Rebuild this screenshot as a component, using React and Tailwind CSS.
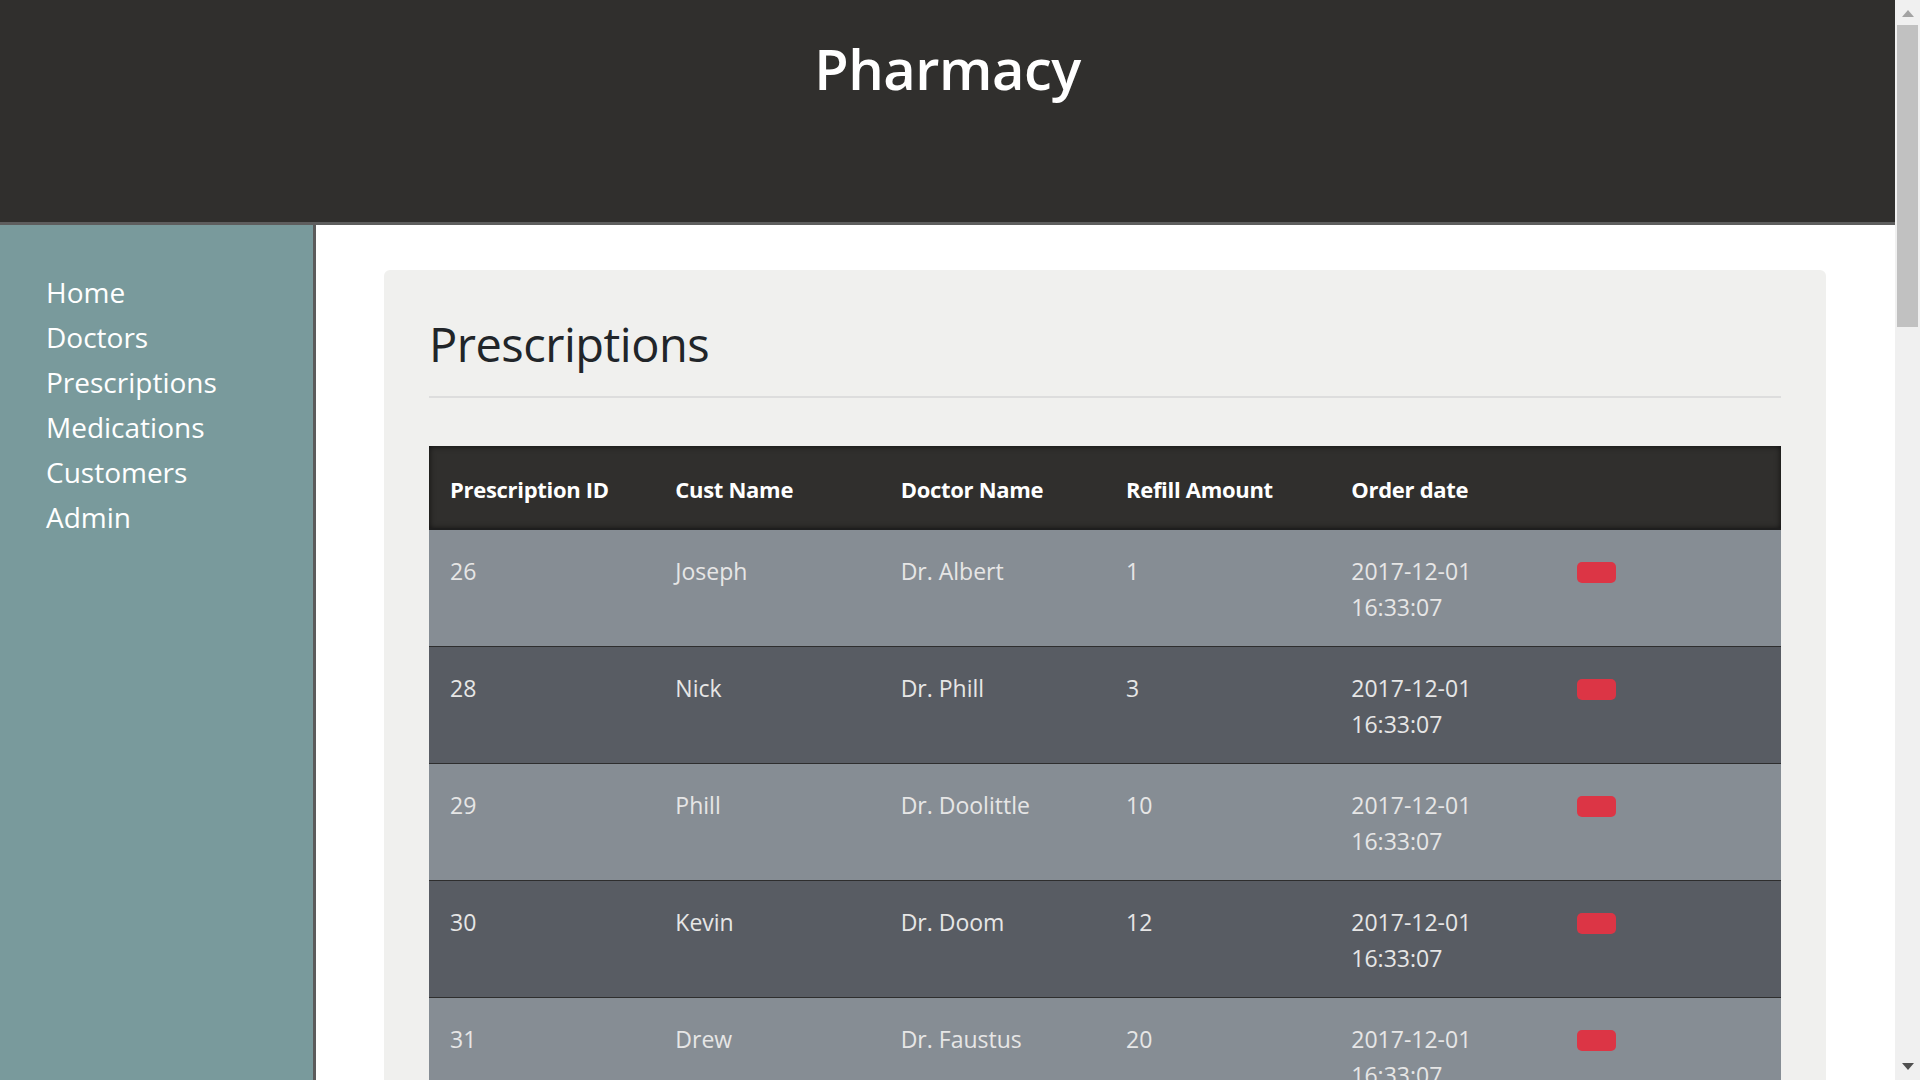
const NAV = ['Home', 'Doctors', 'Prescriptions', 'Medications', 'Customers', 'Admin']

const ROWS = [
  ['26', 'Joseph', 'Dr. Albert', '1'],
  ['28', 'Nick', 'Dr. Phill', '3'],
  ['29', 'Phill', 'Dr. Doolittle', '10'],
  ['30', 'Kevin', 'Dr. Doom', '12'],
  ['31', 'Drew', 'Dr. Faustus', '20'],
]

const HEADS = ['Prescription ID', 'Cust Name', 'Doctor Name', 'Refill Amount', 'Order date', '']

const cell = 'align-top text-[#e6e6e6] text-[23px] leading-[36px] pl-[21px] pr-2 pt-[23px] pb-[21px] whitespace-nowrap'

export default function App() {
  return (
    <div className="min-h-screen flex flex-col bg-white pr-[25px] font-['Open_Sans','Noto_Sans',sans-serif]">

      {/* Header */}
      <header className="h-[225px] shrink-0 bg-[#302f2d] border-b-[3px] border-[#5e5e5e] pt-[32px]">
        <h1 className="text-center text-white font-semibold text-[56px] leading-[72px] tracking-[-0.5px]">Pharmacy</h1>
      </header>

      <div className="flex flex-1">

        {/* Sidebar */}
        <nav className="w-[316px] shrink-0 bg-[#799a9c] border-r-[3px] border-[#5b5b5b] pt-[45px] pl-[46px]">
          {NAV.map(n => (
            <a key={n} href="#" className="block text-white text-[28px] leading-[45px]">{n}</a>
          ))}
        </nav>

        {/* Main */}
        <main className="flex-1 pl-[68px] pr-[69px] pt-[45px] pb-[40px]">
          <div className="bg-[#f0f0ee] rounded-[6px] px-[45px] pt-[44px] pb-[60px]">
            <h2 className="text-[#212529] text-[47px] leading-[60px] tracking-[-0.5px]">Prescriptions</h2>
            <hr className="mt-[22px] border-0 border-t-2 border-[#dddddd]" />

            <table className="mt-[48px] w-full table-fixed border-collapse">
              <thead>
                <tr className="bg-[#302f2d] shadow-[inset_0_0_6px_rgba(0,0,0,0.7)] border-b-[2px] border-[#1e1e1e]">
                  {HEADS.map((h, i) => (
                    <th key={i} className="text-left text-white font-bold text-[22px] leading-[30px] pl-[21px] pr-2 pt-[28px] pb-[24px] whitespace-nowrap tracking-[-0.3px]">{h}</th>
                  ))}
                </tr>
              </thead>
              <tbody>
                {ROWS.map((r, i) => (
                  <tr key={r[0]} className={(i % 2 === 0 ? 'bg-[#868d94]' : 'bg-[#585c63]') + ' border-t border-[#2e2e2e]'}>
                    {r.map((c, j) => (
                      <td key={j} className={cell}>{c}</td>
                    ))}
                    <td className={cell}>
                      2017-12-01<br />16:33:07
                    </td>
                    <td className="align-top pl-[21px] pt-[23px] pb-[21px]">
                      <button className="block mt-[9px] w-[39px] h-[21px] rounded-[5px] bg-[#dc3545]"></button>
                    </td>
                  </tr>
                ))}
              </tbody>
            </table>
          </div>
        </main>
      </div>

      {/* window scrollbar */}
      <div className="fixed top-0 right-0 h-screen w-[25px] bg-[#f0f0f0] flex flex-col items-center">
        <svg width="12" height="7" viewBox="0 0 12 7" className="mt-[10px]"><path d="M6 0 L12 7 L0 7 Z" fill="#a3a3a3" /></svg>
        <div className="mt-[8px] w-[21px] h-[302px] bg-[#c1c1c1]" />
        <div className="flex-1" />
        <svg width="12" height="7" viewBox="0 0 12 7" className="mb-[10px]"><path d="M0 0 L12 0 L6 7 Z" fill="#505050" /></svg>
      </div>
    </div>
  )
}
